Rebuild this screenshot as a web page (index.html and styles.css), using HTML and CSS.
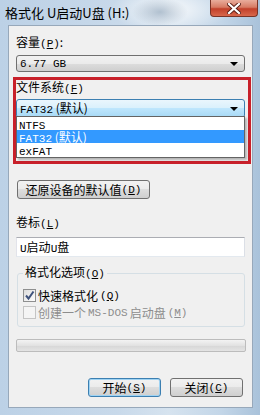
FILE: index.html
```html
<!DOCTYPE html>
<html>
<head>
	<title>格式化 U启动U盘 (H:)</title>
	<meta charset="utf-8">
	<link rel="stylesheet" href="styles.css">
</head>
<body>
	<div class="window">
		<div class="titlebar">
			<div class="title">格式化 U启动U盘 (H:)</div>
			<div class="close">
				<svg width="14" height="11" viewBox="0 0 14 11">
					<path d="M2 1 L12 10 M12 1 L2 10" stroke="#5a1d14" stroke-width="4" stroke-linecap="square"/>
					<path d="M2 1 L12 10 M12 1 L2 10" stroke="#fff" stroke-width="2.2" stroke-linecap="square"/>
				</svg>
			</div>
		</div>
		<div class="panel">
			<div class="label">容量<span class="m">(<u>P</u>)</span>:</div>
			<div class="combo">
				<span class="m">6.77 GB</span>
				<span class="arrow"></span>
			</div>

			<div class="mark">
				<div class="label">文件系统<span class="m">(<u>F</u>)</span></div>
				<div class="combo active">
					<span><span class="m">FAT32</span> (默认)</span>
					<span class="arrow"></span>
				</div>
				<div class="filler"></div>
				<ul class="list">
					<li><span class="m">NTFS</span></li>
					<li class="sel"><span class="m">FAT32</span> (默认)</li>
					<li><span class="m">exFAT</span></li>
				</ul>
			</div>

			<div class="btn wide">还原设备的默认值<span class="m">(<u>D</u>)</span></div>

			<div class="label vol">卷标<span class="m">(<u>L</u>)</span></div>
			<div class="input"><span class="m">U</span>启动<span class="m">U</span>盘</div>

			<fieldset class="group">
				<legend>格式化选项<span class="m">(<u>O</u>)</span></legend>
				<div class="row">
					<span class="check">
						<svg width="11" height="11" viewBox="0 0 11 11">
							<path d="M2 5.5 L4.5 8.5 L9.5 1.5" fill="none" stroke="#3e527c" stroke-width="2"/>
						</svg>
					</span>
					快速格式化<span class="m">(<u>Q</u>)</span>
				</div>
				<div class="row off">
					<span class="check"></span>
					创建一个 <span class="m">MS-DOS</span> 启动盘<span class="m">(<u>M</u>)</span>
				</div>
			</fieldset>

			<div class="progress"></div>

			<div class="actions">
				<div class="btn main">开始<span class="m">(<u>S</u>)</span></div>
				<div class="btn">关闭<span class="m">(<u>C</u>)</span></div>
			</div>
		</div>
	</div>
</body>
</html>
```

FILE: styles.css
```css
* {
	box-sizing: border-box;
}
body {
	margin: 0;
	font: 12px/14px "Noto Sans CJK SC", sans-serif;
	color: #000;
}
.m {
	font-family: "Liberation Mono", monospace;
	font-size: 11px;
}
.window {
	width: 260px;
	height: 415px;
	overflow: hidden;
	background:
		radial-gradient(ellipse 28px 14px at 160px 12px, rgba(150,170,190,0.7), rgba(150,170,190,0)),
		radial-gradient(ellipse 60px 22px at 170px 10px, rgba(255,255,255,0.8), rgba(255,255,255,0)),
		linear-gradient(90deg, #bcd1e6, #c8d9ea 45%, #d6e3ef 65%, #c3d6e8 85%, #a9c2da);
}
.titlebar {
	height: 25px;
	display: flex;
	justify-content: space-between;
	align-items: flex-start;
}
.title {
	padding: 5px 0 0 5px;
	font-size: 13px;
	line-height: 15px;
}
.close {
	width: 48px;
	height: 17px;
	margin-right: 2px;
	display: flex;
	align-items: center;
	justify-content: center;
	border: 1px solid #7a3326;
	border-top: none;
	border-radius: 0 0 4px 4px;
	background: linear-gradient(#e9ad9c, #d77b64 45%, #c2402a 55%, #d8684c);
}
.panel {
	margin: 0 7px 0 8px;
	height: 383px;
	padding: 9px 7px 0 7px;
	background: #f0f0f0;
	border: 1px solid #97a8ba;
}
.label {
	line-height: 14px;
}
.combo {
	width: 229px;
	height: 17px;
	margin-top: 4px;
	padding: 0 6px 0 3px;
	display: flex;
	justify-content: space-between;
	align-items: center;
	border: 1px solid #707070;
	border-radius: 3px;
	background: linear-gradient(#f2f2f2, #ebebeb 50%, #dddddd 50%, #cfcfcf);
}
.combo.active {
	height: 19px;
	margin-top: 3px;
	border-color: #3c7fb1;
	background: linear-gradient(#eaf6fd, #d9f0fc 50%, #bee6fd 50%, #a7d9f5);
}
.arrow {
	width: 0;
	height: 0;
	border-left: 4px solid transparent;
	border-right: 4px solid transparent;
	border-top: 4px solid #000;
}
.mark {
	position: relative;
	width: 238px;
	height: 87px;
	margin: 5px 0 0 -3px;
	border: 3px solid #c8202a;
}
.list {
	position: absolute;
	top: 36px;
	left: 0;
	width: 229px;
	height: 42px;
	margin: 0;
	padding: 0;
	list-style: none;
	background: #fff;
	border: 1px solid #646464;
	box-shadow: 2px 2px 2px rgba(0,0,0,0.25);
}
.list li {
	height: 13px;
	line-height: 13px;
	padding-left: 2px;
}
.list li.sel {
	background: #3399ff;
	color: #fff;
}
.btn {
	height: 19px;
	display: flex;
	align-items: center;
	justify-content: center;
	border: 1px solid #707070;
	border-radius: 3px;
	background: linear-gradient(#f2f2f2, #ebebeb 50%, #dddddd 50%, #cfcfcf);
}
.btn.wide {
	width: 133px;
	margin: 16px 0 0 1px;
}
.label.vol {
	margin-top: 16px;
}
.input {
	width: 229px;
	height: 20px;
	margin-top: 6px;
	padding-left: 3px;
	line-height: 18px;
	background: #fff;
	border: 1px solid #abadb3;
	border-color: #abadb3 #dbdfe6 #e3e9ef #e2e3ea;
}
.group {
	width: 228px;
	margin: 9px 0 0 1px;
	padding: 0 5px 7px 5px;
	border: 1px solid #d5dfe5;
	border-radius: 3px;
}
.group legend {
	padding: 0 2px;
	line-height: 12px;
}
.row {
	height: 13px;
	display: flex;
	align-items: center;
	gap: 2px;
	margin-top: 4px;
}
.group legend + .row {
	margin-top: 9px;
}
.row.off {
	color: #8d8d8d;
}
.check {
	width: 13px;
	height: 13px;
	display: flex;
	align-items: center;
	justify-content: center;
	border: 1px solid #8e8f8f;
	background: linear-gradient(135deg, #dcdcdc, #fefefe);
}
.row.off .check {
	border-color: #c4c4c4;
	background: #f4f4f4;
}
.progress {
	width: 230px;
	height: 13px;
	margin-top: 12px;
	border: 1px solid #bcbcbc;
	border-radius: 2px;
	background: linear-gradient(#f3f3f3, #e2e2e2 50%, #d6d6d6 50%, #e4e4e4);
}
.actions {
	display: flex;
	justify-content: flex-end;
	gap: 9px;
	margin-top: 26px;
	padding-right: 2px;
}
.actions .btn {
	width: 73px;
}
.btn.main {
	border-color: #3c7fb1;
	box-shadow: inset 0 0 0 1px #9fd3f3;
}
```
